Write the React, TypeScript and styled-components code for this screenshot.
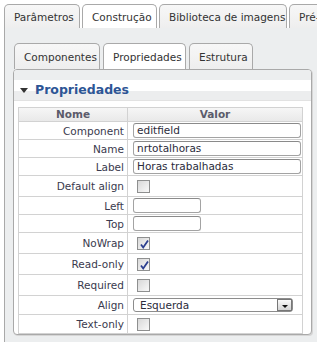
import React from "react";
import styled, { createGlobalStyle } from "styled-components";

const GlobalStyle = createGlobalStyle`
  html, body {
    margin: 0;
    padding: 0;
    background: #ffffff;
    overflow: hidden;
  }
  body {
    font-family: "DejaVu Sans", Verdana, sans-serif;
    font-size: 10px;
    color: #333;
  }
`;

const Root = styled.div`
  padding: 4px 0 0 4px;
  width: 340px;
  height: 342px;
  box-sizing: border-box;
`;

const TabBar = styled.div<{ $inner?: boolean }>`
  display: flex;
  gap: ${(p) => (p.$inner ? "3px" : "2px")};
  height: ${(p) => (p.$inner ? "26px" : "24px")};
  margin-left: ${(p) => (p.$inner ? "1px" : "0")};
  align-items: stretch;
`;

const Tab = styled.div<{ $active?: boolean; $w: number }>`
  width: ${(p) => p.$w}px;
  box-sizing: border-box;
  border: 1px solid #a9a9a9;
  border-bottom: none;
  border-radius: 5px 5px 0 0;
  background: ${(p) =>
    p.$active ? "#ffffff" : "linear-gradient(#f7f7f7, #eeeeee)"};
  display: flex;
  align-items: center;
  padding-left: 9px;
  white-space: nowrap;
  overflow: hidden;
  color: #333;
  font-size: 10.5px;
`;

const OuterPanel = styled.div`
  background: #eceeef;
  border-left: 1px solid #a9a9a9;
  padding: 15px 0 0 8px;
  height: 320px;
  box-sizing: border-box;
`;

const Box = styled.div`
  width: 299px;
  height: 266px;
  box-sizing: border-box;
  border: 1px solid #a9a9a9;
  border-radius: 4px;
  box-shadow: 1px 1px 0 #d6d6d6;
  background: #ffffff;
  overflow: hidden;
  display: flex;
  flex-direction: column;
`;

const BoxTop = styled.div`
  height: 11px;
  background: #eceeef;
`;

const Header = styled.div`
  height: 23px;
  background: linear-gradient(#ffffff 0, #ffffff 56%, #ecedee 56%, #ecedee 100%);
  border-bottom: 1px solid #e2e2e2;
  display: flex;
  align-items: center;
  padding-left: 6px;
  gap: 7px;
  color: #2d5595;
  font-weight: bold;
  font-size: 12.5px;
`;

const Arrow = styled.div`
  width: 0;
  height: 0;
  border-left: 4px solid transparent;
  border-right: 4px solid transparent;
  border-top: 5px solid #333;
  margin-top: 1px;
`;

const Table = styled.div`
  margin: 6px 0 0 4px;
  width: 285px;
  border: 1px solid #d2d2d2;
  box-sizing: border-box;
`;

const Row = styled.div<{ $h: number }>`
  display: grid;
  grid-template-columns: 108px 1fr;
  height: ${(p) => p.$h}px;
  border-top: 1px solid #d2d2d2;
  &:first-child {
    border-top: none;
  }
`;

const HeadCell = styled.div`
  background: linear-gradient(#f6f6f6, #e9e9e9);
  font-weight: bold;
  color: #5b5b6b;
  font-size: 10.5px;
  text-align: center;
  line-height: 12px;
  & + & {
    border-left: 1px solid #d2d2d2;
  }
`;

const NameCell = styled.div`
  display: flex;
  align-items: center;
  justify-content: flex-end;
  padding-right: 3px;
  color: #3a3a4e;
  font-size: 10.5px;
  white-space: nowrap;
`;

const ValueCell = styled.div`
  border-left: 1px solid #d2d2d2;
  display: flex;
  align-items: center;
  padding-left: 5px;
`;

const TextInput = styled.div<{ $w: number }>`
  width: ${(p) => p.$w}px;
  height: 15px;
  box-sizing: border-box;
  border: 1px solid #a3a3a3;
  border-top-color: #8a8a8a;
  border-radius: 3px;
  background: #fff;
  padding-left: 3px;
  font-size: 10.5px;
  line-height: 13px;
  color: #2b2b3b;
  white-space: nowrap;
`;

const CheckBox = styled.div`
  width: 13px;
  height: 13px;
  margin-left: 4px;
  box-sizing: border-box;
  border: 1px solid #8e8f8f;
  background: linear-gradient(135deg, #d8d8d8, #f9f9f9);
  position: relative;
  & svg {
    position: absolute;
    left: 1px;
    top: 1px;
  }
`;

const Select = styled.div`
  width: 160px;
  height: 14px;
  box-sizing: border-box;
  border: 1px solid #8c8c8c;
  border-radius: 3px;
  background: #fff;
  display: flex;
  align-items: center;
  justify-content: space-between;
  padding-left: 6px;
  font-size: 10.5px;
  color: #2b2b3b;
`;

const DropButton = styled.div`
  width: 15px;
  height: 12px;
  box-sizing: border-box;
  border: 1px solid #777;
  background: linear-gradient(#fafafa, #d4d4d4);
  display: flex;
  align-items: center;
  justify-content: center;
  & span {
    width: 0;
    height: 0;
    border-left: 3px solid transparent;
    border-right: 3px solid transparent;
    border-top: 3px solid #111;
    margin-top: 2px;
  }
`;

const Check = () => (
  <svg width="11" height="11" viewBox="0 0 11 11">
    <path d="M2 5.5 L4.2 8.5 L9 1.5" fill="none" stroke="#2c3f8f" strokeWidth="1.8" />
  </svg>
);

type Prop =
  | { name: string; kind: "text"; value: string; w: number; h: number }
  | { name: string; kind: "check"; checked: boolean; h: number }
  | { name: string; kind: "select"; value: string; h: number };

const props: Prop[] = [
  { name: "Component", kind: "text", value: "editfield", w: 168, h: 17 },
  { name: "Name", kind: "text", value: "nrtotalhoras", w: 168, h: 17 },
  { name: "Label", kind: "text", value: "Horas trabalhadas", w: 168, h: 17 },
  { name: "Default align", kind: "check", checked: false, h: 20 },
  { name: "Left", kind: "text", value: "", w: 68, h: 17 },
  { name: "Top", kind: "text", value: "", w: 68, h: 17 },
  { name: "NoWrap", kind: "check", checked: true, h: 20 },
  { name: "Read-only", kind: "check", checked: true, h: 20 },
  { name: "Required", kind: "check", checked: false, h: 20 },
  { name: "Align", kind: "select", value: "Esquerda", h: 18 },
  { name: "Text-only", kind: "check", checked: false, h: 18 },
];

export default function App() {
  return (
    <Root>
      <GlobalStyle />
      <TabBar>
        <Tab $w={76}>Parâmetros</Tab>
        <Tab $w={75} $active>
          Construção
        </Tab>
        <Tab $w={128}>Biblioteca de imagens</Tab>
        <Tab $w={40}>Pré-visualização</Tab>
      </TabBar>
      <OuterPanel>
        <TabBar $inner>
          <Tab $w={86}>Componentes</Tab>
          <Tab $w={83} $active>
            Propriedades
          </Tab>
          <Tab $w={64}>Estrutura</Tab>
        </TabBar>
        <Box>
          <BoxTop />
          <Header>
            <Arrow />
            Propriedades
          </Header>
          <Table>
            <Row $h={13}>
              <HeadCell>Nome</HeadCell>
              <HeadCell>Valor</HeadCell>
            </Row>
            {props.map((p) => (
              <Row key={p.name} $h={p.h}>
                <NameCell>{p.name}</NameCell>
                <ValueCell>
                  {p.kind === "text" && <TextInput $w={p.w}>{p.value}</TextInput>}
                  {p.kind === "check" && <CheckBox>{p.checked && <Check />}</CheckBox>}
                  {p.kind === "select" && (
                    <Select>
                      {p.value}
                      <DropButton>
                        <span />
                      </DropButton>
                    </Select>
                  )}
                </ValueCell>
              </Row>
            ))}
          </Table>
        </Box>
      </OuterPanel>
    </Root>
  );
}
